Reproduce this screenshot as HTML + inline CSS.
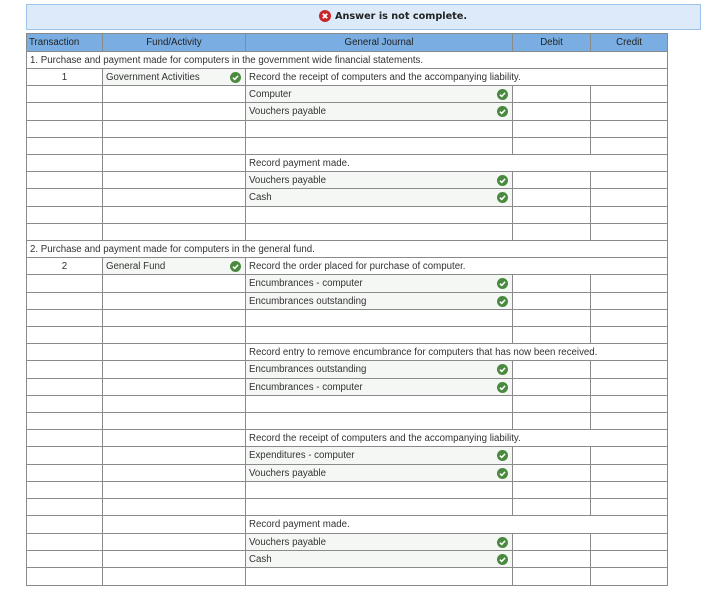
<!DOCTYPE html>
<html><head><meta charset="utf-8"><style>
body{margin:0;background:#fff;width:701px;height:616px;overflow:hidden;font-family:"Liberation Sans",Arial,sans-serif;font-size:9.7px;color:#333;position:relative}
.ban{position:absolute;left:26px;top:4px;width:673px;height:24px;background:#dceafa;border:1px solid #9cc3ea;}
.ban span{position:absolute;left:308px;top:6px;font-family:"DejaVu Sans",Verdana,sans-serif;font-weight:bold;font-size:9.7px;color:#222}
.ban svg{position:absolute;left:292px;top:5px}
table{position:absolute;left:26px;top:33px;width:641px;border-collapse:collapse;table-layout:fixed}
td{border:1px solid #8a8a8a;padding:2px 3px 0 3px;height:14px;line-height:14px;white-space:nowrap;overflow:visible;position:relative;vertical-align:top}
tr.t td{height:15px}
tr.h td{background:#7aaee3;color:#222;text-align:center;height:15px}
tr.h td:first-child{text-align:left;padding-left:2px}
.c{text-align:center}
.g{background:#f5f7f5}
.k{position:absolute;right:4px;top:3px;width:11px;height:11px}
</style></head><body>
<div class="ban"><svg width="12" height="12" viewBox="0 0 12 12"><circle cx="6" cy="6" r="6" fill="#c9262b"/><path d="M3.8 3.8L8.2 8.2M8.2 3.8L3.8 8.2" stroke="#fff" stroke-width="1.8"/></svg><span>Answer is not complete.</span></div>
<svg width="0" height="0" style="position:absolute"><defs><symbol id="ck" viewBox="0 0 12 12"><circle cx="6" cy="6" r="6" fill="#4a8a3e"/><path d="M3.2 6.2L5.2 8.1L8.8 4.2" stroke="#fff" stroke-width="1.7" fill="none"/></symbol></defs></svg>
<table>
<colgroup><col style="width:76px"><col style="width:143px"><col style="width:267px"><col style="width:78px"><col style="width:77px"></colgroup>
<tr class="h"><td>Transaction</td><td>Fund/Activity</td><td>General Journal</td><td>Debit</td><td>Credit</td></tr>
<tr><td colspan="5">1. Purchase and payment made for computers in the government wide financial statements.</td></tr>
<tr><td class="c">1</td><td class="g">Government Activities<svg class="k"><use href="#ck"/></svg></td><td colspan="3">Record the receipt of computers and the accompanying liability.</td></tr>
<tr><td></td><td></td><td class="g">Computer<svg class="k"><use href="#ck"/></svg></td><td></td><td></td></tr>
<tr class="t"><td></td><td></td><td class="g">Vouchers payable<svg class="k"><use href="#ck"/></svg></td><td></td><td></td></tr>
<tr><td></td><td></td><td></td><td></td><td></td></tr>
<tr><td></td><td></td><td></td><td></td><td></td></tr>
<tr><td></td><td></td><td colspan="3">Record payment made.</td></tr>
<tr><td></td><td></td><td class="g">Vouchers payable<svg class="k"><use href="#ck"/></svg></td><td></td><td></td></tr>
<tr class="t"><td></td><td></td><td class="g">Cash<svg class="k"><use href="#ck"/></svg></td><td></td><td></td></tr>
<tr><td></td><td></td><td></td><td></td><td></td></tr>
<tr><td></td><td></td><td></td><td></td><td></td></tr>
<tr><td colspan="5">2. Purchase and payment made for computers in the general fund.</td></tr>
<tr><td class="c">2</td><td class="g">General Fund<svg class="k"><use href="#ck"/></svg></td><td colspan="3">Record the order placed for purchase of computer.</td></tr>
<tr class="t"><td></td><td></td><td class="g">Encumbrances - computer<svg class="k"><use href="#ck"/></svg></td><td></td><td></td></tr>
<tr><td></td><td></td><td class="g">Encumbrances outstanding<svg class="k"><use href="#ck"/></svg></td><td></td><td></td></tr>
<tr><td></td><td></td><td></td><td></td><td></td></tr>
<tr><td></td><td></td><td></td><td></td><td></td></tr>
<tr><td></td><td></td><td colspan="3">Record entry to remove encumbrance for computers that has now been received.</td></tr>
<tr class="t"><td></td><td></td><td class="g">Encumbrances outstanding<svg class="k"><use href="#ck"/></svg></td><td></td><td></td></tr>
<tr><td></td><td></td><td class="g">Encumbrances - computer<svg class="k"><use href="#ck"/></svg></td><td></td><td></td></tr>
<tr><td></td><td></td><td></td><td></td><td></td></tr>
<tr><td></td><td></td><td></td><td></td><td></td></tr>
<tr><td></td><td></td><td colspan="3">Record the receipt of computers and the accompanying liability.</td></tr>
<tr class="t"><td></td><td></td><td class="g">Expenditures - computer<svg class="k"><use href="#ck"/></svg></td><td></td><td></td></tr>
<tr><td></td><td></td><td class="g">Vouchers payable<svg class="k"><use href="#ck"/></svg></td><td></td><td></td></tr>
<tr><td></td><td></td><td></td><td></td><td></td></tr>
<tr><td></td><td></td><td></td><td></td><td></td></tr>
<tr class="t"><td></td><td></td><td colspan="3">Record payment made.</td></tr>
<tr><td></td><td></td><td class="g">Vouchers payable<svg class="k"><use href="#ck"/></svg></td><td></td><td></td></tr>
<tr><td></td><td></td><td class="g">Cash<svg class="k"><use href="#ck"/></svg></td><td></td><td></td></tr>
<tr class="t"><td></td><td></td><td></td><td></td><td></td></tr>
</table>
</body></html>
